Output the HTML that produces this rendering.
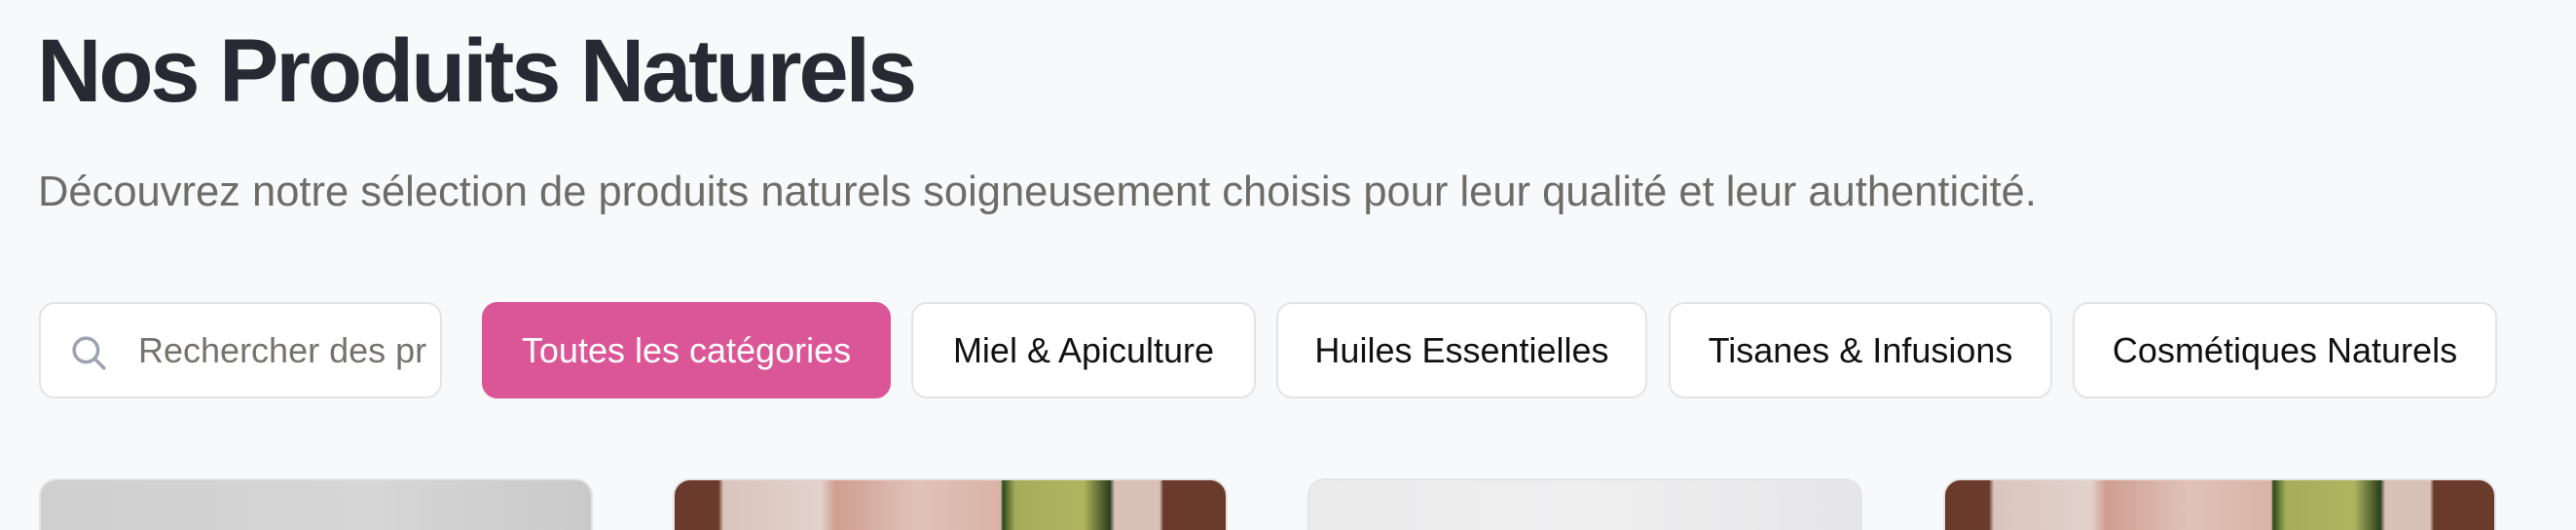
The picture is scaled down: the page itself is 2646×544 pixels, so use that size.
<!DOCTYPE html>
<html><head><meta charset="utf-8"><style>
*{margin:0;padding:0;box-sizing:border-box}
html,body{width:2646px;height:544px;overflow:hidden}
body{background:#f8f9fa;position:relative;font-family:"Liberation Sans",Arial,sans-serif}
.t{position:absolute;left:38px;top:18px;font-size:92px;font-weight:bold;color:#272a33;letter-spacing:-3.1px;line-height:110px;white-space:nowrap}
.s{position:absolute;left:39px;top:170px;font-size:43.5px;color:#6e6c69;line-height:54px;white-space:nowrap}
.b{position:absolute;top:310px;height:99px;border:2px solid #e6e4e2;background:#fff;border-radius:16px;font-size:36px;color:#111;display:flex;align-items:center;justify-content:center;white-space:nowrap}
.p{background:#db5696;border-color:#db5696;color:#fff}
.c{position:absolute;top:491px;height:80px;border:2px solid #e6e4e2;border-radius:18px;overflow:hidden}
</style></head><body>
<div class="t">Nos Produits Naturels</div>
<div class="s">Découvrez notre sélection de produits naturels soigneusement choisis pour leur qualité et leur authenticité.</div>
<div class="b" style="left:40px;width:414px;justify-content:flex-start;overflow:hidden">
<svg style="position:absolute;left:28px;top:29px" width="42" height="42" viewBox="0 0 24 24" fill="none" stroke="#9ca3af" stroke-width="2" stroke-linecap="round"><circle cx="10.5" cy="10.5" r="7"/><path d="M15.5 15.5L21 21"/></svg>
<span style="position:absolute;left:100px;color:#77726d">Rechercher des pr</span></div>
<div class="b p" style="left:495px;width:420px">Toutes les catégories</div>
<div class="b" style="left:936px;width:354px">Miel &amp; Apiculture</div>
<div class="b" style="left:1311px;width:381px">Huiles Essentielles</div>
<div class="b" style="left:1714px;width:394px">Tisanes &amp; Infusions</div>
<div class="b" style="left:2129px;width:436px">Cosmétiques Naturels</div>
<div class="c" style="left:40px;width:569px;background:linear-gradient(90deg,#cfcfcf,#d6d6d6 60%,#cacaca)"></div>
<div class="c" style="left:691px;width:570px;background:linear-gradient(90deg,#6a3a2d 0,#6a3a2d 45px,#d9c5bd 50px,#e2d2cb 150px,#cf9e90 165px,#e0c2b8 250px,#d9b3a6 335px,#2d4a1c 337px,#a5ad5a 350px,#b0b45f 420px,#2b3e1a 447px,#d8c0b8 452px,#d8c0b8 498px,#6a3a2d 502px)"></div>
<div class="c" style="left:1343px;width:570px;background:linear-gradient(90deg,#ebebec,#efeff0 50%,#e6e6e8)"></div>
<div class="c" style="left:1996px;width:568px;background:linear-gradient(90deg,#6a3a2d 0,#6a3a2d 45px,#d9c5bd 50px,#e2d2cb 150px,#cf9e90 165px,#e0c2b8 250px,#d9b3a6 335px,#2d4a1c 337px,#a5ad5a 350px,#b0b45f 420px,#2b3e1a 447px,#d8c0b8 452px,#d8c0b8 498px,#6a3a2d 502px)"></div>
</body></html>
